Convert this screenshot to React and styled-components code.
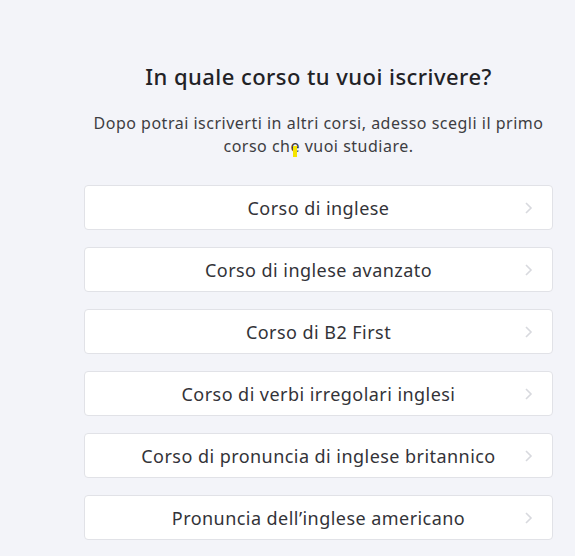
import React from "react";
import styled, { createGlobalStyle } from "styled-components";

const Global = createGlobalStyle`
  html, body { margin: 0; padding: 0; background: #f3f4f9; }
  body { font-family: "Noto Sans", "Open Sans", sans-serif; }
`;

const Page = styled.div`
  min-height: 556px;
  box-sizing: border-box;
  padding: 60px 22px 0 84px;
  background: #f3f4f9;
`;

const Title = styled.h1`
  margin: 0;
  text-align: center;
  font-size: 22px;
  line-height: 32px;
  font-weight: 500;
  letter-spacing: 0.45px;
  color: #222226;
`;

const Subtitle = styled.p`
  position: relative;
  margin: 20px 0 0;
  text-align: center;
  font-size: 16px;
  line-height: 23px;
  letter-spacing: 0.5px;
  color: #3d3d42;
`;

const Cursor = styled.span`
  position: absolute;
  left: 209px;
  top: 34px;
  width: 4px;
  height: 11px;
  background: #f5e400;
`;

const List = styled.div`
  display: flex;
  flex-direction: column;
  gap: 17px;
  margin-top: 27px;
`;

const Card = styled.button`
  position: relative;
  display: flex;
  align-items: center;
  justify-content: center;
  height: 45px;
  width: 100%;
  box-sizing: border-box;
  padding: 0 40px;
  background: #fff;
  border: 1px solid #e1e2e7;
  border-radius: 4px;
  font-family: inherit;
  font-size: 18px;
  letter-spacing: 0.45px;
  color: #333338;
  cursor: pointer;
`;

const Chevron = styled.svg`
  position: absolute;
  right: 19px;
  top: 50%;
  transform: translateY(-50%);
  width: 9px;
  height: 14px;
`;

const courses = [
  "Corso di inglese",
  "Corso di inglese avanzato",
  "Corso di B2 First",
  "Corso di verbi irregolari inglesi",
  "Corso di pronuncia di inglese britannico",
  "Pronuncia dell’inglese americano",
];

export default function App() {
  return (
    <>
      <Global />
      <Page>
        <Title>In quale corso tu vuoi iscrivere?</Title>
        <Subtitle>
          Dopo potrai iscriverti in altri corsi, adesso scegli il primo
          <br />
          corso che vuoi studiare.
          <Cursor />
        </Subtitle>
        <List>
          {courses.map((c) => (
            <Card key={c}>
              {c}
              <Chevron viewBox="0 0 9 14">
                <path d="M2 2 L7 7 L2 12" fill="none" stroke="#d8d9de" strokeWidth="1.6" />
              </Chevron>
            </Card>
          ))}
        </List>
      </Page>
    </>
  );
}
